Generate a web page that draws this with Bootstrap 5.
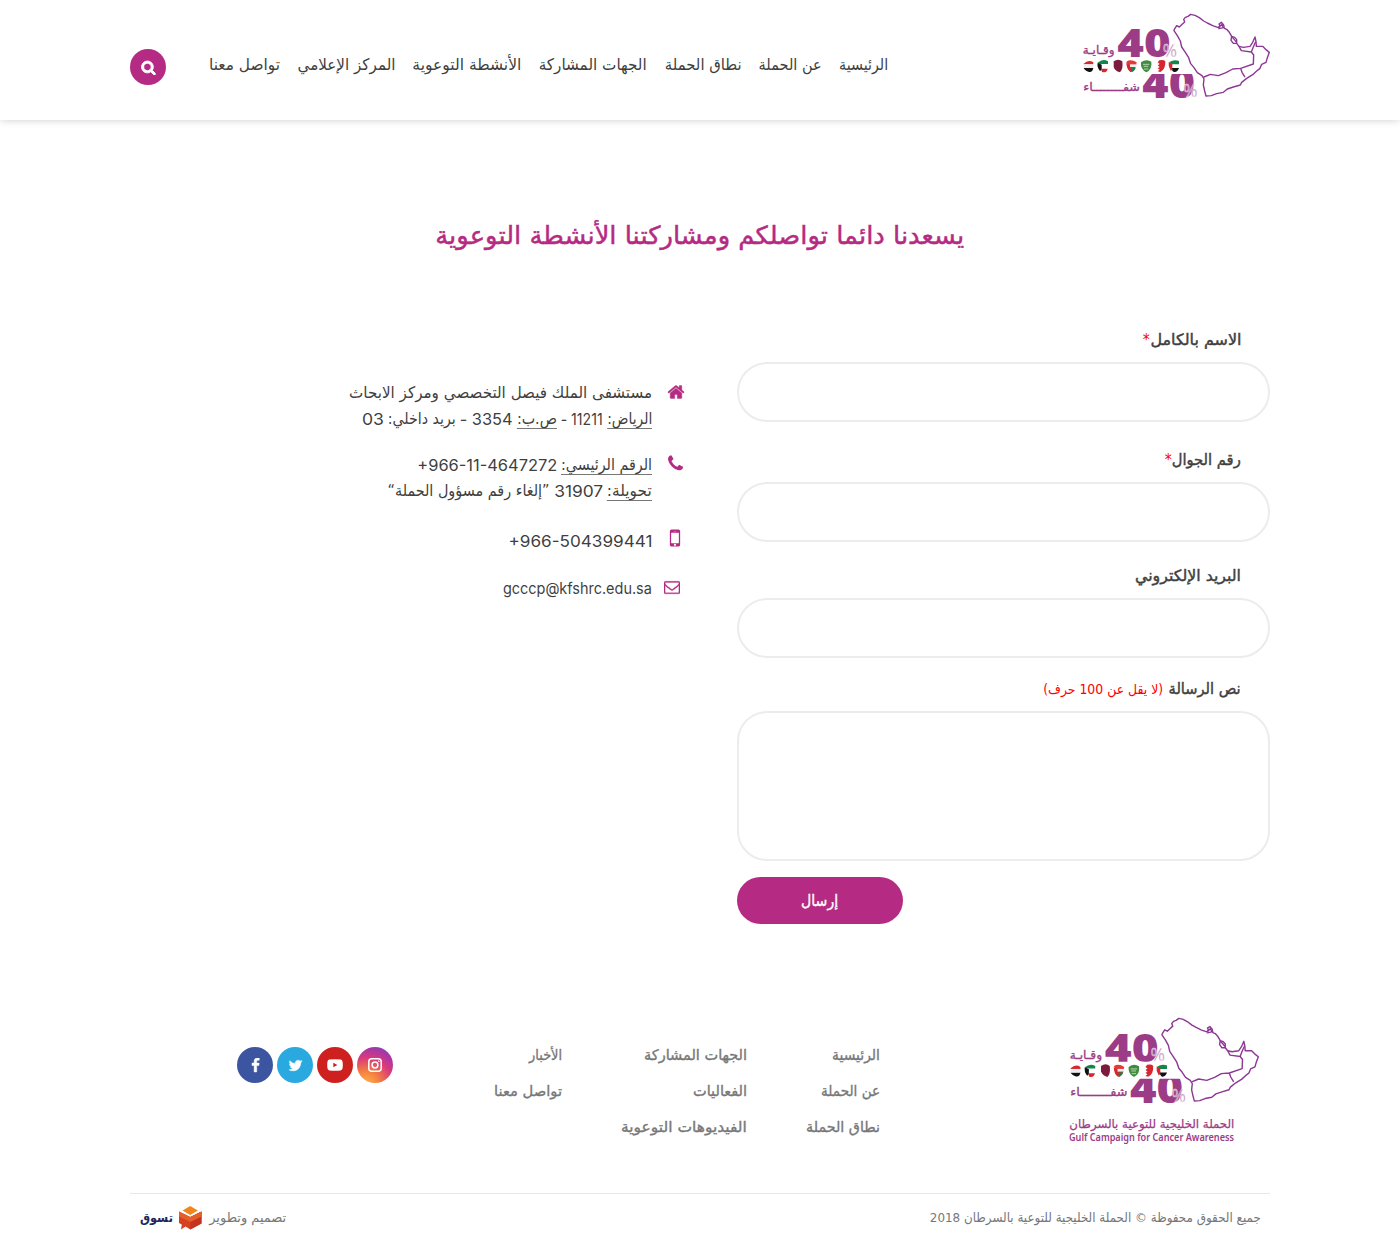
<!DOCTYPE html>
<html lang="ar" dir="rtl">
<head>
<meta charset="utf-8">
<meta name="viewport" content="width=device-width, initial-scale=1">
<title>تواصل معنا</title>
<link href="https://cdn.jsdelivr.net/npm/bootstrap@5.3.0/dist/css/bootstrap.min.css" rel="stylesheet">
<style>
:root{--brand:#b52a82;--ink:#3f3f3f}
body{font-family:"DejaVu Sans",sans-serif;font-size:16px;color:var(--ink);background:#fff;overflow-x:hidden}
a{color:inherit;text-decoration:none}
.page-wrap{width:1140px;margin:0 auto}
.site-header{height:120px;box-shadow:0 0 8px rgba(0,0,0,.2)}
.site-header .page-wrap{height:120px}
.brand-mark{width:188px;height:87px;margin-top:13px;display:block}
.mark-num{fill:#9c3c86;font-family:"Open Sans",sans-serif;font-weight:800;font-size:115px;direction:ltr}
.mark-pct{fill:#b87aa9;stroke:#fff;stroke-width:1;font-family:"Open Sans",sans-serif;font-size:52px;direction:ltr}
.mark-word{fill:#9c3c86;stroke:#9c3c86;stroke-width:1;font-family:"DejaVu Sans",sans-serif;font-size:35px;direction:rtl}
.main-menu{margin-inline-start:194px;margin-top:52px;gap:17.3px;line-height:26px}
.search-btn{width:36px;height:36px;background:var(--brand);color:#fff;margin-top:49px}
.search-btn svg{stroke:currentColor;stroke-width:110}
.fit{display:inline-block;white-space:nowrap;transform-origin:100% 50%}
.page-title{color:var(--brand);font-size:25px;line-height:40px;margin:96px 0 0;font-weight:400;-webkit-text-stroke:.45px}
.contact-row{margin-top:71px;height:690px}
.contact-form{width:533px}
.field-label{font-size:15.5px;line-height:26px;padding-inline-start:29px;display:block;-webkit-text-stroke:.45px}
.field-label .req{color:#f00;-webkit-text-stroke:0}
.field-box{border:2px solid #ececec;border-radius:30px;height:60px;padding:0 28px;background:#fff}
textarea.field-box{height:150px;padding:14px 28px;resize:none}
.contact-form .field-label+.field-box{margin-top:9px}
#f1{margin-bottom:25px}
#f2{margin-bottom:21px}
#f3{margin-bottom:18px}
.hint{font-size:13.5px;margin-inline-start:1px}
.send-btn{width:166px;height:47px;border-radius:24px;background:var(--brand);color:#fff;border:0;font-size:16px;line-height:26px;padding:0;-webkit-text-stroke:.4px}
.contact-list{margin-inline-start:52px;margin-top:53px;line-height:26px}
.contact-item{display:flex}
.contact-icon{width:33px;color:var(--brand);flex:none}
.contact-icon svg{display:block;margin-top:3px}
.latin{font-family:Inter,sans-serif}
.u-line{border-bottom:1px solid #777;line-height:19px}
.parts{display:flex;gap:4px}
.item-phone{margin-top:20px}
.item-phone svg{margin-top:2px}
.item-mobile{margin-top:24px}
.item-mobile svg{margin:-2px -2px 0 0}
.item-mail{margin-top:21px}
.item-mail svg{margin:4px 5px 0 0}
.foot-row{height:176px}
.foot-logo{width:190px;margin-inline-start:11px}
.foot-logo svg{display:block}
.foot-name{color:#9c3c86;line-height:16px;font-size:12px;padding-inline-start:25px}
.ar-name{margin-top:11px;-webkit-text-stroke:.25px}
.en-name{font-family:"Noto Sans","Open Sans",sans-serif;font-weight:600;font-size:10px;line-height:11px}
.foot-links{line-height:36px;font-size:14.5px;color:#777;-webkit-text-stroke:.35px;padding-top:20px}
.foot-links a{display:block}
.col-a{margin-inline-start:189px;width:133px}
.col-b{width:185px}
.col-c{width:169px}
.social{margin-top:30px}
.soc{width:36px;height:36px;color:#fff}
.soc-fb{background:#3b55a0}.soc-tw{background:#2aa9e0}.soc-yt{background:#cf2020}
.soc-ig{background:radial-gradient(circle at 25% 105%,#fdb54e 0,#f5833f 28%,#d93a7a 58%,#a936a5 78%,#5b51d8 105%)}
.copy-bar{border-top:1px solid #e8e8e8;color:#777;font-size:13px;line-height:20px;padding:14px 9px 0 10px}
.maker{color:#22265c;font-weight:700}
.maker-cube{margin:-2px 7px 0 6px}
</style>
</head>
<body>
<svg width="0" height="0" class="position-absolute">
  <clipPath id="upper"><rect x="130" y="60" width="190" height="97"/></clipPath>
  <clipPath id="lower"><rect x="200" y="207" width="200" height="80"/></clipPath>
  <symbol id="campaign" viewBox="36 24 564 261">
    <g>
      <path d="M41 176q14-14 29-4v6H41z" fill="#d9262e"/><path d="M41 189h29q-3 15-15 11-12-4-14-11z" fill="#111"/><path d="M41 178h29v11H41z" fill="#eee"/>
      <path d="M83 173q15-13 31-4v8H89z" fill="#12864a"/><path d="M83 173l12 6v15l-5 4q-10-12-7-25z" fill="#111"/><path d="M93 191h20q-3 14-17 10z" fill="#d9262e"/>
      <path d="M131 169q14-9 26 0 3 24-7 33-16-4-19-17z" fill="#7d1b3d"/>
      <path d="M169 170q14-9 31 2l-2 10h-22z" fill="#e33a36"/><path d="M169 172l9 8 20 4q-6 18-17 17-12-8-12-29z" fill="#d9262e"/><path d="M183 189h14q-5 12-13 12z" fill="#12864a"/><path d="M180 178h19v8h-19z" fill="#eee"/>
      <path d="M213 172q16-12 31-2 3 23-15 32-18-9-16-30z" fill="#3f8b3f"/><path d="M219 178h19M221 184h14M222 192h13" stroke="#cfe6c8" stroke-width="2.5"/>
      <path d="M268 166q13-3 18 3 1 25-15 32l-8-2 6-5-6-4 6-4-6-5 6-4-6-5z" fill="#d9262e"/>
      <path d="M298 171q15-9 29-3v10h-22z" fill="#12864a"/><path d="M296 171l11 5v18l-5 3q-8-12-6-26z" fill="#d9262e"/><path d="M306 189h21q-5 14-15 12-7-3-6-12z" fill="#111"/>
    </g>
    <g fill="none" stroke="#8d3795" stroke-width="4.2" stroke-linejoin="round" stroke-linecap="round">
      <path d="M313 73L320 62 328 66 334 60 344 51 341 43 346 37 354 34 362 28 375 31 388 38 401 48 412 54 428 62 445 68 450 62 447 57 454 52 461 60 463 70 470 73 478 82 485 94 494 97 500 104 500 115 507 124 520 127 540 124 548 112 555 96 558 110 559 124 578 124 588 134 598 142 592 158 588 172 575 178 570 190 560 198 548 209 530 220 515 232 511 240 490 246 472 252 460 262 440 266 424 272 408 273 404 258 400 240 402 222 396 212 382 203 372 188 362 176 356 158 346 142 335 126 331 108 322 92 312 77z"/>
      <path d="M402 216L421 208 445 212 468 203 488 192 512 190 550 177 551 150 544 141 514 137 507 124M512 190L516 202 524 215M556 112L549 128 544 141M448 66L456 58 460 68 447 71M485 94L483 106 490 115 500 115M488 98L498 110"/>
    </g>
  </symbol>
</svg>

<header class="site-header">
  <div class="page-wrap d-flex align-items-start justify-content-between">
    <div class="d-flex align-items-start">
      <a href="#"><svg class="brand-mark" viewBox="36 24 564 261">
        <g clip-path="url(#upper)"><text class="mark-num" x="142" y="157" textLength="160" lengthAdjust="spacingAndGlyphs">40</text></g>
        <g clip-path="url(#lower)"><text class="mark-num" x="217" y="278" font-size="128" style="font-size:128px" textLength="158" lengthAdjust="spacingAndGlyphs">40</text></g>
        <text class="mark-pct" x="278" y="156" textLength="43" lengthAdjust="spacingAndGlyphs">%</text>
        <text class="mark-pct" x="340" y="277" textLength="43" lengthAdjust="spacingAndGlyphs">%</text>
        <text class="mark-word" x="134" y="148" textLength="96" lengthAdjust="spacingAndGlyphs">وقـايـة</text>
        <text class="mark-word" x="210" y="257" textLength="170" lengthAdjust="spacingAndGlyphs">شفــــــــاء</text>
        <use href="#campaign" x="36" y="24" width="564" height="261"/>
      </svg></a>
      <nav class="main-menu d-flex">
        <a href="#" class="fit" data-fit="49">الرئيسية</a>
        <a href="#" class="fit" data-fit="63">عن الحملة</a>
        <a href="#" class="fit" data-fit="77">نطاق الحملة</a>
        <a href="#" class="fit" data-fit="108">الجهات المشاركة</a>
        <a href="#" class="fit" data-fit="109">الأنشطة التوعوية</a>
        <a href="#" class="fit" data-fit="98">المركز الإعلامي</a>
        <a href="#" class="fit" data-fit="71">تواصل معنا</a>
      </nav>
    </div>
    <a href="#" class="search-btn rounded-circle d-flex align-items-center justify-content-center"><svg width="15" height="15" viewBox="0 0 1792 1792" fill="currentColor"><path d="M1216 832q0-185-131.5-316.5t-316.5-131.5-316.5 131.5-131.5 316.5 131.5 316.5 316.5 131.5 316.5-131.5 131.5-316.5zm512 832q0 52-38 90t-90 38q-54 0-90-38l-343-342q-179 124-399 124-143 0-273.5-55.5t-225-150-150-225-55.5-273.5 55.5-273.5 150-225 225-150 273.5-55.5 273.5 55.5 225 150 150 225 55.5 273.5q0 220-124 399l343 343q37 37 37 90z"/></svg></a>
  </div>
</header>

<main class="page-wrap">
  <h1 class="page-title text-center"><span class="fit" data-fit="529">يسعدنا دائما تواصلكم ومشاركتنا الأنشطة التوعوية</span></h1>
  <div class="contact-row d-flex align-items-start">
    <form class="contact-form">
      <label class="field-label" for="f1"><span class="fit" data-fit="91">الاسم بالكامل</span><span class="req fit" data-fit="7">*</span></label>
      <input class="field-box d-block w-100" id="f1">
      <label class="field-label" for="f2"><span class="fit" data-fit="69">رقم الجوال</span><span class="req fit" data-fit="7">*</span></label>
      <input class="field-box d-block w-100" id="f2">
      <label class="field-label" for="f3"><span class="fit" data-fit="106">البريد الإلكتروني</span></label>
      <input class="field-box d-block w-100" id="f3">
      <label class="field-label" for="f4"><span class="fit" data-fit="72">نص الرسالة</span> <span class="req hint"><span class="fit" data-fit="120">(لا يقل عن 100 حرف)</span></span></label>
      <textarea class="field-box d-block w-100" id="f4"></textarea>
      <div class="d-flex justify-content-end mt-3"><button type="button" class="send-btn"><span class="fit" data-fit="37">إرسال</span></button></div>
    </form>
    <div class="contact-list">
      <div class="contact-item">
        <div class="contact-icon"><svg width="18" height="18" viewBox="0 0 1792 1792" fill="currentColor" stroke="currentColor" stroke-width="40"><path d="M1472 992v480q0 26-19 45t-45 19h-384v-384h-256v384h-384q-26 0-45-19t-19-45v-480q0-1 .5-3t.5-3l575-474 575 474q1 2 1 6zm223-69l-62 74q-8 9-21 11h-3q-13 0-21-7l-692-577-692 577q-12 8-24 7-13-2-21-11l-62-74q-8-10-7-23.5t11-21.500l719-599q32-26 76-26t76 26l244 204v-195q0-14 9-23t23-9h192q14 0 23 9t9 23v408l219 182q10 8 11 21.500t-7 23.500z"/></svg></div>
        <div>
          <div><span class="fit" data-fit="303">مستشفى الملك فيصل التخصصي ومركز الابحاث</span></div>
          <div class="parts"><span><span class="fit u-line" data-fit="45">الرياض:</span></span><span class="latin fit" data-fit="42">11211 -</span><span><span class="fit u-line" data-fit="40">ص.ب:</span></span><span class="latin fit" data-fit="53">3354 -</span><span class="fit" data-fit="68">بريد داخلي:</span><span class="latin fit" data-fit="22">03</span></div>
        </div>
      </div>
      <div class="contact-item item-phone">
        <div class="contact-icon"><svg width="19" height="19" viewBox="0 0 1792 1792" fill="currentColor"><path d="M1600 1240q0 27-10 70.5t-21 68.5q-21 50-122 106-94 51-186 51-27 0-52.5-3.500t-57.500-12.500-47.500-14.500-55.500-20.500-49-18q-98-35-175-83-128-79-264.500-215.500t-215.500-264.500q-48-77-83-175-3-9-18-49t-20.500-55.500-14.500-47.500-12.500-57.500-3.500-52.500q0-92 51-186 56-101 106-122 25-11 68.500-21t70.500-10q14 0 21 3 18 6 53 76 11 19 30 54t35 63.500 31 53.500q3 4 17.500 25t21.500 35.500 7 28.500q0 20-28.500 50t-62 55-62 53-28.500 46q0 9 5 22.500t8.500 20.500 14 24 11.500 19q76 137 174 235t235 174q2 1 19 11.500t24 14 20.500 8.500 22.500 5q18 0 46-28.500t53-62 55-62 50-28.500q14 0 28.500 7t35.500 21.500 25 17.500q25 15 53.500 31t63.500 35 54 30q70 35 76 53 3 7 3 21z"/></svg></div>
        <div>
          <div class="parts"><span><span class="fit u-line" data-fit="91">الرقم الرئيسي:</span></span><span class="latin fit" dir="ltr" data-fit="140">+966-11-4647272</span></div>
          <div class="parts"><span><span class="fit u-line" data-fit="45">تحويلة:</span></span><span class="latin fit" data-fit="49">31907</span><span class="fit" data-fit="162">”إلغاء رقم مسؤول الحملة“</span></div>
        </div>
      </div>
      <div class="contact-item item-mobile">
        <div class="contact-icon"><svg width="24" height="24" viewBox="0 0 1792 1792" fill="currentColor"><path d="M976 1408q0-33-23.500-56.500t-56.500-23.500-56.500 23.500-23.500 56.500 23.500 56.500 56.500 23.500 56.500-23.500 23.500-56.500zm208-160v-704q0-13-9.500-22.500t-22.500-9.500h-512q-13 0-22.500 9.500t-9.500 22.500v704q0 13 9.500 22.500t22.500 9.500h512q13 0 22.500-9.500t9.500-22.500zm-192-848q0-16-16-16h-160q-16 0-16 16t16 16h160q16 0 16-16zm288-16v1024q0 52-38 90t-90 38h-512q-52 0-90-38t-38-90v-1024q0-52 38-90t90-38h512q52 0 90 38t38 90z"/></svg></div>
        <span class="latin fit" dir="ltr" data-fit="144">+966-504399441</span>
      </div>
      <div class="contact-item item-mail">
        <div class="contact-icon"><svg width="16" height="16" viewBox="0 0 1792 1792" fill="currentColor" stroke="currentColor" stroke-width="30"><path d="M1664 1504v-768q-32 36-69 66-268 206-426 338-51 43-83 67t-86.500 48.500-102.500 24.500h-2q-48 0-102.500-24.500t-86.500-48.500-83-67q-158-132-426-338-37-30-69-66v768q0 13 9.500 22.500t22.500 9.500h1472q13 0 22.500-9.500t9.500-22.500zm0-1051v-24.500l-.5-13-3-12.500-5.500-9-9-7.500-14-2.500h-1472q-13 0-22.500 9.500t-9.500 22.500q0 168 147 284 193 152 401 317 6 5 35 29.500t46 37.500 44.500 31.500 50.500 27.500 43 9h2q20 0 43-9t50.500-27.500 44.500-31.500 46-37.500 35-29.500q208-165 401-317 54-43 100.500-115.500t46.500-131.500zm128-37v1088q0 66-47 113t-113 47h-1472q-66 0-113-47t-47-113v-1088q0-66 47-113t113-47h1472q66 0 113 47t47 113z"/></svg></div>
        <span class="latin fit" dir="ltr" data-fit="149">gcccp@kfshrc.edu.sa</span>
      </div>
    </div>
  </div>
</main>

<footer class="page-wrap">
  <div class="foot-row d-flex align-items-start">
    <div class="foot-logo">
      <svg width="190" height="88" viewBox="36 24 564 261">
        <g clip-path="url(#upper)"><text class="mark-num" x="142" y="157" textLength="160" lengthAdjust="spacingAndGlyphs">40</text></g>
        <g clip-path="url(#lower)"><text class="mark-num" x="217" y="278" style="font-size:128px" textLength="158" lengthAdjust="spacingAndGlyphs">40</text></g>
        <text class="mark-pct" x="278" y="156" textLength="43" lengthAdjust="spacingAndGlyphs">%</text>
        <text class="mark-pct" x="340" y="277" textLength="43" lengthAdjust="spacingAndGlyphs">%</text>
        <text class="mark-word" x="134" y="148" textLength="96" lengthAdjust="spacingAndGlyphs">وقـايـة</text>
        <text class="mark-word" x="210" y="257" textLength="170" lengthAdjust="spacingAndGlyphs">شفــــــــاء</text>
        <use href="#campaign" x="36" y="24" width="564" height="261"/>
      </svg>
      <div class="foot-name ar-name"><span class="fit" data-fit="165">الحملة الخليجية للتوعية بالسرطان</span></div>
      <div class="foot-name en-name"><span class="fit" data-fit="165">Gulf Campaign for Cancer Awareness</span></div>
    </div>
    <div class="foot-links col-a">
      <a href="#"><span class="fit" data-fit="48">الرئيسية</span></a>
      <a href="#"><span class="fit" data-fit="59">عن الحملة</span></a>
      <a href="#"><span class="fit" data-fit="74">نطاق الحملة</span></a>
    </div>
    <div class="foot-links col-b">
      <a href="#"><span class="fit" data-fit="103">الجهات المشاركة</span></a>
      <a href="#"><span class="fit" data-fit="54">الفعاليات</span></a>
      <a href="#"><span class="fit" data-fit="126">الفيديوهات التوعوية</span></a>
    </div>
    <div class="foot-links col-c">
      <a href="#"><span class="fit" data-fit="33">الأخبار</span></a>
      <a href="#"><span class="fit" data-fit="68">تواصل معنا</span></a>
    </div>
    <div class="social d-flex gap-1">
      <a href="#" class="soc soc-ig rounded-circle d-flex align-items-center justify-content-center"><svg width="14" height="14" viewBox="0 0 14 14" fill="none" stroke="#fff" stroke-width="1.5"><rect x=".8" y=".8" width="12.400" height="12.400" rx="3"/><circle cx="7" cy="7" r="2.900"/><circle cx="10.800" cy="3.200" r=".5" fill="#fff" stroke-width=".7"/></svg></a>
      <a href="#" class="soc soc-yt rounded-circle d-flex align-items-center justify-content-center"><svg width="16" height="12" viewBox="0 0 16 12"><path d="M2.500.6Q8 0 13.500.6q1.700.2 2 1.800.6 3.600 0 7.200-.3 1.600-2 1.800-5.500.6-11 0-1.700-.2-2-1.800-.6-3.600 0-7.200.3-1.600 2-1.800z" fill="#fff"/><path d="M6.300 3.800v4.400L10.400 6z" fill="#cf2020"/></svg></a>
      <a href="#" class="soc soc-tw rounded-circle d-flex align-items-center justify-content-center"><svg width="15" height="15" viewBox="0 0 1792 1792" fill="currentColor" stroke="currentColor" stroke-width="50"><path d="M1684 408q-67 98-162 167 1 14 1 42 0 130-38 259.500t-115.500 248.500-184.500 210.500-258 146-323 54.500q-271 0-496-145 35 4 78 4 225 0 401-138-105-2-188-64.500t-114-159.500q33 5 61 5 43 0 85-11-112-23-185.500-111.500t-73.500-205.500v-4q68 38 146 41-66-44-105-115t-39-154q0-88 44-163 121 149 294.500 238.500t371.500 99.500q-8-38-8-74 0-134 94.500-228.500t228.500-94.500q140 0 236 102 109-21 205-78-37 115-142 178 93-10 186-50z"/></svg></a>
      <a href="#" class="soc soc-fb rounded-circle d-flex align-items-center justify-content-center"><svg width="15" height="15" viewBox="0 0 1792 1792" fill="currentColor" stroke="currentColor" stroke-width="60"><path d="M1343 12v264h-157q-86 0-116 36t-30 108v189h293l-39 296h-254v759h-306v-759h-255v-296h255v-218q0-186 104-288.500t277-102.500q147 0 228 12z"/></svg></a>
    </div>
  </div>
  <div class="copy-bar d-flex justify-content-between">
    <div><span class="fit" data-fit="331">جميع الحقوق محفوظة © الحملة الخليجية للتوعية بالسرطان 2018</span></div>
    <div class="d-flex">
      <span class="fit" data-fit="77">تصميم وتطوير</span>
      <svg class="maker-cube" width="23" height="24" viewBox="0 0 23 24"><path d="M0 5.500L11.300 11 22.500 5.500V17.500L11.300 23.500 6.500 20.500 2 23.500l.8-5L0 17z" fill="#d8401f"/><path d="M11.300 11L22.500 5.500V17.500L11.300 23.500z" fill="#c5331f"/><path d="M0 5.500L11.300 11 22.500 5.500v5L11.300 16 0 10.500z" fill="#e2602a"/><path d="M3.500 4.500L11.200 0l7.700 4.500L11.200 9z" fill="#f0861e"/></svg>
      <span class="maker"><span class="fit" data-fit="33">تسوق</span></span>
    </div>
  </div>
</footer>
<script src="https://cdn.jsdelivr.net/npm/bootstrap@5.3.0/dist/js/bootstrap.bundle.min.js"></script>
<script>
document.querySelectorAll('.fit').forEach(function (el) {
  var target = +el.dataset.fit, w = el.getBoundingClientRect().width;
  el.style.transform = 'scaleX(' + target / w + ')';
  el.style.marginLeft = (target - w) + 'px';
});
</script>
</body>
</html>
